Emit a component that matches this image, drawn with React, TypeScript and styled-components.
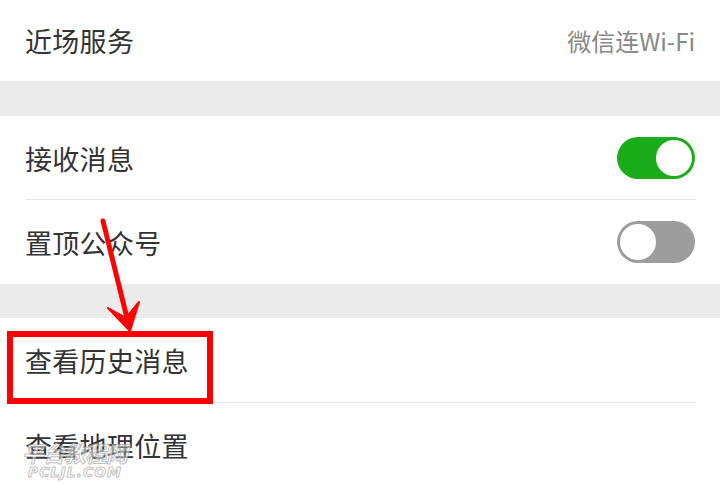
import * as React from 'react'
import styled, { createGlobalStyle } from 'styled-components'

const GlobalStyle = createGlobalStyle`
  html, body { margin: 0; padding: 0; background: #fff; }
  body { font-family: "Noto Sans CJK SC", "Noto Sans", sans-serif; }
`

const Page = styled.div`
  position: relative;
  width: 720px;
  height: 484px;
  overflow: hidden;
  background: #fff;
`

const Group = styled.div`
  display: flex;
  flex-direction: column;
  background: #fff;
`

const Band = styled.div<{ h: number }>`
  height: ${p => p.h}px;
  background: #ebebeb;
`

const Row = styled.div<{ h: number; divider?: boolean }>`
  position: relative;
  height: ${p => p.h}px;
  display: flex;
  align-items: center;
  justify-content: space-between;
  padding: 0 25px;
  box-sizing: border-box;
  ${p => p.divider ? `
    &::after {
      content: '';
      position: absolute;
      left: 25px;
      right: 24px;
      bottom: 0;
      height: 1px;
      background: #e6e6e6;
    }
  ` : ''}
`

const Label = styled.span`
  font-size: 27px;
  color: #333;
  letter-spacing: 0.3px;
`

const Value = styled.span`
  font-size: 24px;
  color: #888;
`

const Track = styled.div<{ on?: boolean }>`
  width: 78px;
  height: 42px;
  border-radius: 21px;
  background: ${p => p.on ? '#1aad19' : '#9d9d9d'};
  display: flex;
  align-items: center;
  justify-content: ${p => p.on ? 'flex-end' : 'flex-start'};
  padding: 0 3px;
  box-sizing: border-box;
`

const Knob = styled.div`
  width: 36px;
  height: 36px;
  border-radius: 50%;
  background: #fff;
`

const Highlight = styled.div`
  position: absolute;
  left: 7px;
  top: 331px;
  width: 206px;
  height: 73px;
  border: 6px solid #ff0000;
  box-sizing: border-box;
`

const Arrow = styled.svg`
  position: absolute;
  left: 0;
  top: 0;
  pointer-events: none;
`

const Watermark = styled.div`
  position: absolute;
  left: 22px;
  top: 440px;
  display: flex;
  flex-direction: column;
  align-items: flex-start;
  color: rgba(255, 255, 255, 0.55);
  -webkit-text-stroke: 1px rgba(150, 150, 150, 0.6);
  pointer-events: none;
`

const MarkCn = styled.span`
  font-size: 22px;
  line-height: 24px;
  font-weight: bold;
  font-style: italic;
  letter-spacing: -1px;
`

const MarkEn = styled.span`
  font-family: "DejaVu Sans", sans-serif;
  font-size: 14px;
  line-height: 16px;
  font-weight: bold;
  font-style: italic;
  letter-spacing: 1px;
  margin-left: 6px;
`

const Switch = ({ on }: { on?: boolean }) => (
  <Track on={on}><Knob /></Track>
)

export default function App() {
  return (
    <Page>
      <GlobalStyle />
      <Group>
        <Row h={81}>
          <Label>近场服务</Label>
          <Value>微信连Wi-Fi</Value>
        </Row>
      </Group>
      <Band h={35} />
      <Group>
        <Row h={84} divider>
          <Label>接收消息</Label>
          <Switch on />
        </Row>
        <Row h={84}>
          <Label>置顶公众号</Label>
          <Switch />
        </Row>
      </Group>
      <Band h={34} />
      <Group>
        <Row h={85} divider>
          <Label>查看历史消息</Label>
        </Row>
        <Row h={84}>
          <Label>查看地理位置</Label>
        </Row>
      </Group>

      <Highlight />
      <Arrow width="720" height="484" viewBox="0 0 720 484">
        <line x1="103" y1="221" x2="128" y2="322" stroke="#ff0000" strokeWidth="5" strokeLinecap="round" />
        <path d="M130 331 L108 308 L126 318 L139 302 Z" fill="#ff0000" stroke="#ff0000" strokeWidth="2" strokeLinejoin="round" />
      </Arrow>
      <Watermark>
        <MarkCn>平台教程网</MarkCn>
        <MarkEn>PCLJL.COM</MarkEn>
      </Watermark>
    </Page>
  )
}
